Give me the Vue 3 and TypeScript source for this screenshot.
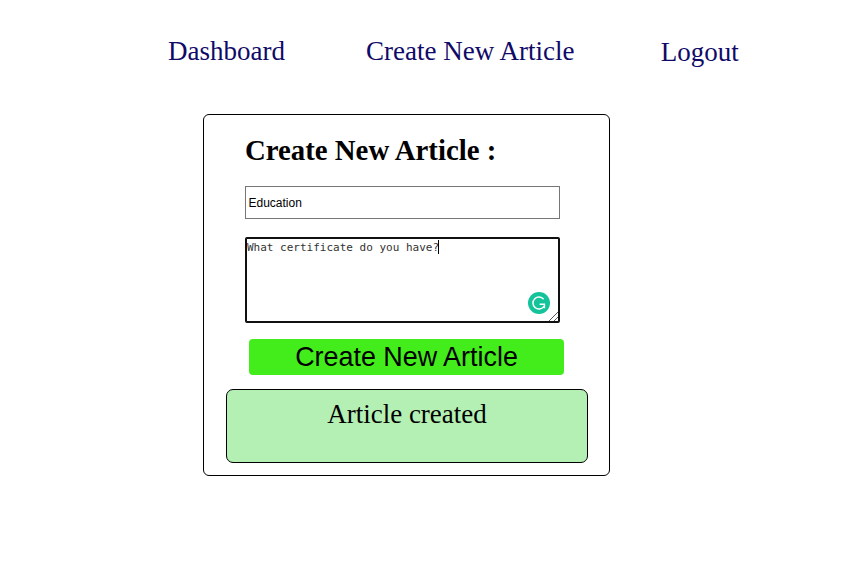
<script setup lang="ts">
import { ref } from 'vue'

interface NavLink {
  label: string
  name: string
}

const links: NavLink[] = [
  { label: 'Dashboard', name: 'dashboard' },
  { label: 'Create New Article', name: 'create' },
  { label: 'Logout', name: 'logout' },
]
const title = ref<string>('Education')
const body = ref<string>('What certificate do you have?')
const message = ref<string>('Article created')
</script>

<template>
  <div class="page">
    <nav class="nav">
      <a v-for="link in links" :key="link.name" :class="['link', link.name]">{{ link.label }}</a>
    </nav>
    <form class="card" @submit.prevent>
      <h1 class="heading">Create New Article :</h1>
      <input v-model="title" class="title" type="text" />
      <div class="editor">
        <textarea v-model="body" class="body" spellcheck="false"></textarea>
        <span class="caret"></span>
        <svg class="badge" viewBox="0 0 22 22">
          <circle cx="11" cy="11" r="11" fill="#15c39a" />
          <path d="M15.6 7.2A6 6 0 1 0 15.8 14.6M11.6 12.2H16.4V16.2" fill="none" stroke="#fff" stroke-width="1.5" />
        </svg>
        <svg class="grip" viewBox="0 0 9 9">
          <path d="M0 9L9 0M5 9L9 5" fill="none" stroke="#444" stroke-width="0.9" />
        </svg>
      </div>
      <button class="submit" type="submit">Create New Article</button>
      <div class="notice">{{ message }}</div>
    </form>
  </div>
</template>

<style>
body {
  margin: 0;
  background: #fff;
}
</style>

<style scoped>
.page {
  box-sizing: border-box;
  height: 567px;
  padding: 36px 0 0;
  overflow: hidden;
  font-family: "Liberation Serif", "Times New Roman", serif;
}
.nav {
  display: flex;
  height: 78px;
  padding-left: 168px;
}
.link {
  font-size: 27px;
  line-height: 31px;
  color: #0f0a68;
  white-space: nowrap;
}
.create {
  margin-left: 81px;
}
.logout {
  margin: 1px 0 0 86.4px;
}
.card {
  box-sizing: border-box;
  display: flex;
  flex-direction: column;
  width: 407px;
  height: 362px;
  margin-left: 203px;
  padding: 19px 21px 0 22px;
  border: 1px solid #000;
  border-radius: 6px;
}
.heading {
  margin: 0 0 20px 19px;
  font-size: 28.8px;
  line-height: 32px;
}
.title {
  box-sizing: border-box;
  width: 315px;
  height: 33px;
  margin: 0 0 18px 19px;
  padding: 1px 2.5px;
  border: 1px solid #767676;
  border-radius: 0;
  outline: none;
  font: 12px "Liberation Sans", Arial, sans-serif;
  color: #000;
}
.editor {
  position: relative;
  width: 315px;
  height: 86px;
  margin: 0 0 16px 19px;
}
.body {
  display: block;
  box-sizing: border-box;
  width: 100%;
  height: 100%;
  padding: 2px 0;
  border: 2px solid #101010;
  border-radius: 2px;
  outline: none;
  resize: none;
  overflow: hidden;
  font: 11px/13px "DejaVu Sans Mono", monospace;
  color: #333;
}
.caret {
  position: absolute;
  top: 3px;
  left: 193px;
  width: 1px;
  height: 14px;
  background: #000;
}
.badge {
  position: absolute;
  top: 55px;
  left: 283px;
  width: 22px;
  height: 22px;
}
.grip {
  position: absolute;
  right: 2px;
  bottom: 2px;
  width: 9px;
  height: 9px;
}
.submit {
  width: 315px;
  height: 36px;
  margin: 0 0 14px 23px;
  padding: 0;
  border: 0;
  border-radius: 4px;
  background: #43ed1b;
  font: 26.9px/36px "Liberation Sans", Arial, sans-serif;
  color: #000;
}
.notice {
  box-sizing: border-box;
  width: 362px;
  height: 74px;
  padding-top: 9px;
  border: 1px solid #000;
  border-radius: 7px;
  background: #b4f0b4;
  font-size: 27px;
  line-height: 31px;
  text-align: center;
  color: #000;
}
</style>
